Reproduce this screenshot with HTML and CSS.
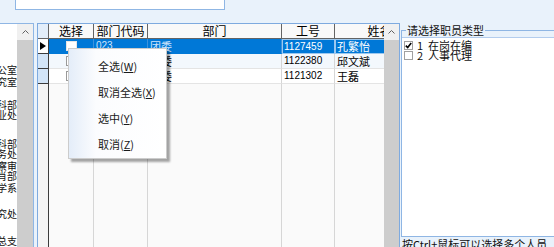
FILE: index.html
```html
<!DOCTYPE html>
<html lang="zh-CN">
<head>
    <meta charset="UTF-8">
    <title>选择职员</title>
    <link rel="stylesheet" href="styles.css">
</head>
<body>
    <div class="topbar">
        <div class="search-box"></div>
    </div>

    <div class="main">
        <!-- 部门树 -->
        <div class="dept-tree">
            <div class="tree-list">
                <div class="tree-group g1">
                    <div class="tree-item"><span>公室</span></div>
                    <div class="tree-item sp"><span>究室</span></div>
                </div>
                <div class="tree-group g2">
                    <div class="tree-item"><span>科部</span></div>
                    <div class="tree-item"><span>业处</span></div>
                </div>
                <div class="tree-group g3">
                    <div class="tree-item"><span>科部</span></div>
                    <div class="tree-item"><span>务处</span></div>
                    <div class="tree-item sp"><span>察审</span></div>
                    <div class="tree-item"><span>肖部</span></div>
                    <div class="tree-item sp"><span>学系</span></div>
                </div>
                <div class="tree-group g4">
                    <div class="tree-item"><span>究处</span></div>
                </div>
                <div class="tree-group g5">
                    <div class="tree-item"><span>总支</span></div>
                </div>
            </div>
            <div class="vscroll">
                <div class="vscroll-up">
                    <svg width="7" height="4" viewBox="0 0 7 4"><polyline points="0.5,3.5 3.5,0.5 6.5,3.5" fill="none" stroke="#606060"/></svg>
                </div>
                <div class="vscroll-thumb"></div>
            </div>
        </div>

        <!-- 职员表格 -->
        <div class="grid-wrap">
            <div class="grid">
                <div class="hd ind"></div>
                <div class="hd">选择</div>
                <div class="hd">部门代码</div>
                <div class="hd">部门</div>
                <div class="hd">工号</div>
                <div class="hd">姓名</div>

                <div class="row sel">
                    <div class="cell ind current"><i class="arrow"></i></div>
                    <div class="cell chk"><i class="box"></i></div>
                    <div class="cell dim num">023</div>
                    <div class="cell dim">团委</div>
                    <div class="cell num focus">1127459</div>
                    <div class="cell focus">孔繁怡</div>
                </div>
                <div class="row alt">
                    <div class="cell ind"></div>
                    <div class="cell chk"><i class="box"></i></div>
                    <div class="cell num">023</div>
                    <div class="cell">团委</div>
                    <div class="cell num">1122380</div>
                    <div class="cell">邱文斌</div>
                </div>
                <div class="row">
                    <div class="cell ind"></div>
                    <div class="cell chk"><i class="box"></i></div>
                    <div class="cell num">023</div>
                    <div class="cell">团委</div>
                    <div class="cell num">1121302</div>
                    <div class="cell">王磊</div>
                </div>

                <div class="fill ind"></div>
                <div class="fill"></div>
                <div class="fill"></div>
                <div class="fill"></div>
                <div class="fill"></div>
                <div class="fill"></div>
            </div>
            <div class="vscroll">
                <div class="vscroll-up">
                    <svg width="7" height="4" viewBox="0 0 7 4"><polyline points="0.5,3.5 3.5,0.5 6.5,3.5" fill="none" stroke="#606060"/></svg>
                </div>
                <div class="vscroll-thumb"></div>
            </div>
        </div>

        <!-- 职员类型 -->
        <div class="type-panel">
            <fieldset class="type-group">
                <legend>请选择职员类型</legend>
                <div class="type-list">
                    <div class="type-item">
                        <span class="cb"><svg width="7" height="7" viewBox="0 0 7 7"><polyline points="0.8,3.6 2.7,5.6 6.2,1" fill="none" stroke="#000" stroke-width="1.6"/></svg></span>
                        1&nbsp;&nbsp;在岗在编
                    </div>
                    <div class="type-item">
                        <span class="cb"></span>
                        2&nbsp;&nbsp;人事代理
                    </div>
                </div>
            </fieldset>
            <div class="hint">按Ctrl+鼠标可以选择多个人员</div>
        </div>
    </div>

    <!-- 右键菜单 -->
    <div class="context-menu">
        <div class="menu-item">全选(<u>W</u>)</div>
        <div class="menu-item">取消全选(<u>X</u>)</div>
        <div class="menu-item">选中(<u>Y</u>)</div>
        <div class="menu-item">取消(<u>Z</u>)</div>
    </div>
</body>
</html>
```

FILE: styles.css
```css
body {
    margin: 0;
    width: 554px;
    height: 247px;
    overflow: hidden;
    position: relative;
    background: #e9f2fb;
    font-family: "Noto Sans CJK SC", "Liberation Sans", sans-serif;
    font-size: 11px;
    color: #1b1b1b;
}
.topbar {
    height: 23px;
    padding-left: 15px;
}
.search-box {
    width: 208px;
    height: 9px;
    background: #fff;
    border: 1px solid #8fb6e4;
    border-top: none;
}
.main {
    display: flex;
    height: 224px;
}

/* 部门树 */
.dept-tree {
    display: flex;
    flex: none;
    width: 33px;
    background: #fff;
    border-top: 1px solid #8fb6e4;
    border-right: 1px solid #8fb6e4;
}
.tree-list {
    width: 17px;
    overflow: hidden;
}
.tree-item {
    display: flex;
    justify-content: flex-end;
    height: 10px;
    line-height: 10px;
    font-size: 10px;
    white-space: nowrap;
    color: #111;
}
.tree-item.sp { margin-top: 2px; }
.g1 { margin-top: 41px; }
.g2 { margin-top: 13px; }
.g3 { margin-top: 19px; }
.g4 { margin-top: 16px; }
.g5 { margin-top: 17px; }

.vscroll {
    display: flex;
    flex-direction: column;
    flex: none;
    width: 16px;
    background: #f0f0f0;
}
.vscroll-up {
    height: 16px;
    display: flex;
    align-items: center;
    justify-content: center;
}
.vscroll-thumb {
    flex: 1;
    background: #cdcdcd;
}

/* 表格 */
.grid-wrap {
    display: flex;
    flex: none;
    width: 361px;
    margin-left: 3px;
    border: 1px solid #7eaadf;
    border-bottom: none;
    background: #fafafa;
}
.grid-wrap .vscroll { width: 15px; }
.grid {
    width: 346px;
    overflow: hidden;
    display: grid;
    grid-template-columns: 11px 45px 54px 134px 53px 90px;
    grid-template-rows: 15px 15px 15px 15px 1fr;
}
.grid > div, .row > div {
    box-sizing: border-box;
}
.hd {
    background: #f9f9f9;
    border-right: 1px solid #646464;
    border-bottom: 1px solid #646464;
    text-align: center;
    font-size: 12px;
    line-height: 14px;
    color: #000;
    white-space: nowrap;
    overflow: hidden;
}
.hd.ind {
    background: #e3eefa;
}
.row {
    display: contents;
}
.cell {
    background: #fff;
    border-right: 1px solid #d6d6d6;
    border-bottom: 1px solid #e4e4e4;
    padding-left: 2px;
    line-height: 14px;
    white-space: nowrap;
    overflow: hidden;
    color: #000;
}
.row.alt .cell { background: #f3f8fd; }
.num {
    font-family: "Liberation Sans", sans-serif;
    font-size: 10px;
}
.cell.ind {
    padding: 0;
    background: #d3e5f8;
    border-right-color: #3c3c3c;
    border-bottom-color: #3c3c3c;
}
.row.alt .cell.ind { background: #d3e5f8; }
.cell.ind.current {
    display: flex;
    align-items: center;
    padding-left: 2px;
    background: #fff;
}
.arrow {
    width: 0;
    height: 0;
    border-left: 6px solid #000;
    border-top: 4px solid transparent;
    border-bottom: 4px solid transparent;
}
.row.sel .cell:not(.ind) {
    background: #0078d7;
    color: #fff;
    border-right-color: #3d92dc;
    border-bottom-color: #0078d7;
}
.row.sel .cell.dim { color: #cfe3fa; }
.row.sel .cell.focus {
    border: 1px solid #9cc8ef;
    padding-left: 1px;
    line-height: 13px;
}
.cell.chk {
    display: flex;
    align-items: center;
    justify-content: center;
    padding: 0;
}
.box {
    width: 11px;
    height: 10px;
    box-sizing: border-box;
    border: 1px solid #9a9a9a;
    background: #fff;
}
.row.sel .box { border-color: #e6e6e6; }
.fill {
    background: #fafafa;
    border-right: 1px solid #d6d6d6;
}
.fill.ind {
    background: #f4f4f4;
    border-right-color: #3c3c3c;
}

/* 职员类型 */
.type-panel {
    flex: 1;
    min-width: 0;
    margin-left: 1px;
    overflow: hidden;
}
.type-group {
    margin: 0;
    padding: 0;
    min-width: 0;
    width: 200px;
    border: 1px solid #8fb6e4;
    border-right: none;
}
.type-group legend {
    margin-left: 4px;
    padding: 0 1px;
    line-height: 14px;
    font-size: 11px;
    color: #111;
}
.type-list {
    height: 196px;
    background: #fff;
    border-top: 1px solid #b3cdee;
    padding: 2px 0 0 2px;
    box-sizing: content-box;
}
.type-item {
    display: flex;
    align-items: center;
    height: 10px;
    line-height: 10px;
    white-space: nowrap;
    color: #111;
}
.cb {
    display: flex;
    align-items: center;
    justify-content: center;
    width: 9px;
    height: 9px;
    box-sizing: border-box;
    margin-right: 4px;
    border: 1px solid #a0a0a0;
    background: #fff;
}
.hint {
    padding-left: 1px;
    line-height: 14px;
    white-space: nowrap;
    color: #111;
}

/* 右键菜单 */
.context-menu {
    position: absolute;
    left: 68px;
    top: 48px;
    width: 97px;
    padding: 4px 0 1px;
    border: 1px solid #cccccc;
    background: linear-gradient(to right, #e4edf9, #fbfcfe 28%, #fff);
    box-shadow: 3px 3px 2px rgba(0, 0, 0, 0.35);
}
.menu-item {
    height: 26px;
    line-height: 26px;
    padding-left: 29px;
    white-space: nowrap;
    color: #1a1a1a;
}
.menu-item u {
    text-underline-offset: 1px;
}
```
